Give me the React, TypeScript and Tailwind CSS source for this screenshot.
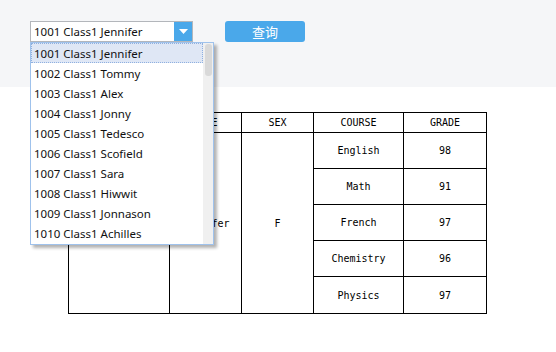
import React from "react";

const names = [
  "1001 Class1 Jennifer",
  "1002 Class1 Tommy",
  "1003 Class1 Alex",
  "1004 Class1 Jonny",
  "1005 Class1 Tedesco",
  "1006 Class1 Scofield",
  "1007 Class1 Sara",
  "1008 Class1 Hiwwit",
  "1009 Class1 Jonnason",
  "1010 Class1 Achilles",
];

const rows = [
  ["English", "98"],
  ["Math", "91"],
  ["French", "97"],
  ["Chemistry", "96"],
  ["Physics", "97"],
];

const sans = { fontFamily: '"Noto Sans", "Open Sans", sans-serif' };

export default function App() {
  return (
    <div className="relative w-[556px] h-[352px] bg-white overflow-hidden">
      <div className="h-[87px] bg-[#f5f6f8] flex items-start pt-[21px] pl-[30px]">
        <div className="relative">
          <div className="flex w-[163px] h-[21px] border border-[#b3b6bb] bg-white">
            <div
              className="flex-1 text-[11.5px] leading-[20px] pl-[3px] text-[#111]"
              style={sans}
            >
              1001 Class1 Jennifer
            </div>
            <div className="w-[18px] h-full bg-[#4aa8ea] flex items-center justify-center">
              <svg width="9" height="5" viewBox="0 0 9 5">
                <polygon points="0,0 9,0 4.5,5" fill="#fff" />
              </svg>
            </div>
          </div>
          <div className="absolute left-0 top-[21px] w-[184px] h-[203px] border border-[#9fc2ec] bg-white shadow-[3px_3px_3px_rgba(0,0,0,0.3)] flex z-10">
            <div className="flex-1 flex flex-col">
              {names.map((n, i) => (
                <div
                  key={n}
                  className={
                    "h-[20px] text-[11.5px] leading-[19px] pl-[2px] text-[#111] border " +
                    (i === 0
                      ? "bg-[#dfe7f5] border-dotted border-[#8fb0e0]"
                      : "border-transparent")
                  }
                  style={sans}
                >
                  {n}
                </div>
              ))}
            </div>
            <div className="w-[10px] bg-[#f0f0f0] flex justify-center pt-[1px]">
              <div className="w-[7px] h-[32px] rounded-[3px] bg-[#d9d9d9]" />
            </div>
          </div>
        </div>
        <button
          className="ml-[32px] w-[80px] h-[21px] rounded-[3px] bg-[#4aa8ea] text-white text-[13px] leading-[21px]"
          style={{ fontFamily: '"Noto Sans CJK SC", sans-serif' }}
        >
          查询
        </button>
      </div>
      <div className="pt-[25px] pl-[68px]">
        <table
          className="border-collapse text-[10px] text-black"
          style={{ fontFamily: '"DejaVu Sans Mono", "Liberation Mono", monospace' }}
        >
          <thead>
            <tr className="h-[20px]">
              <th className="border border-black font-normal w-[101px]">ID</th>
              <th className="border border-black font-normal w-[72px]">NAME</th>
              <th className="border border-black font-normal w-[72px]">SEX</th>
              <th className="border border-black font-normal w-[90px]">COURSE</th>
              <th className="border border-black font-normal w-[83px]">GRADE</th>
            </tr>
          </thead>
          <tbody>
            {rows.map((r, i) => (
              <tr key={r[0]} className={i === 4 ? "h-[37px]" : "h-[36px]"}>
                {i === 0 && (
                  <>
                    <td rowSpan={5} className="border border-black text-center">1001</td>
                    <td rowSpan={5} className="border border-black text-center">Jennifer</td>
                    <td rowSpan={5} className="border border-black text-center">F</td>
                  </>
                )}
                <td className="border border-black text-center">{r[0]}</td>
                <td className="border border-black text-center">{r[1]}</td>
              </tr>
            ))}
          </tbody>
        </table>
      </div>
    </div>
  );
}
